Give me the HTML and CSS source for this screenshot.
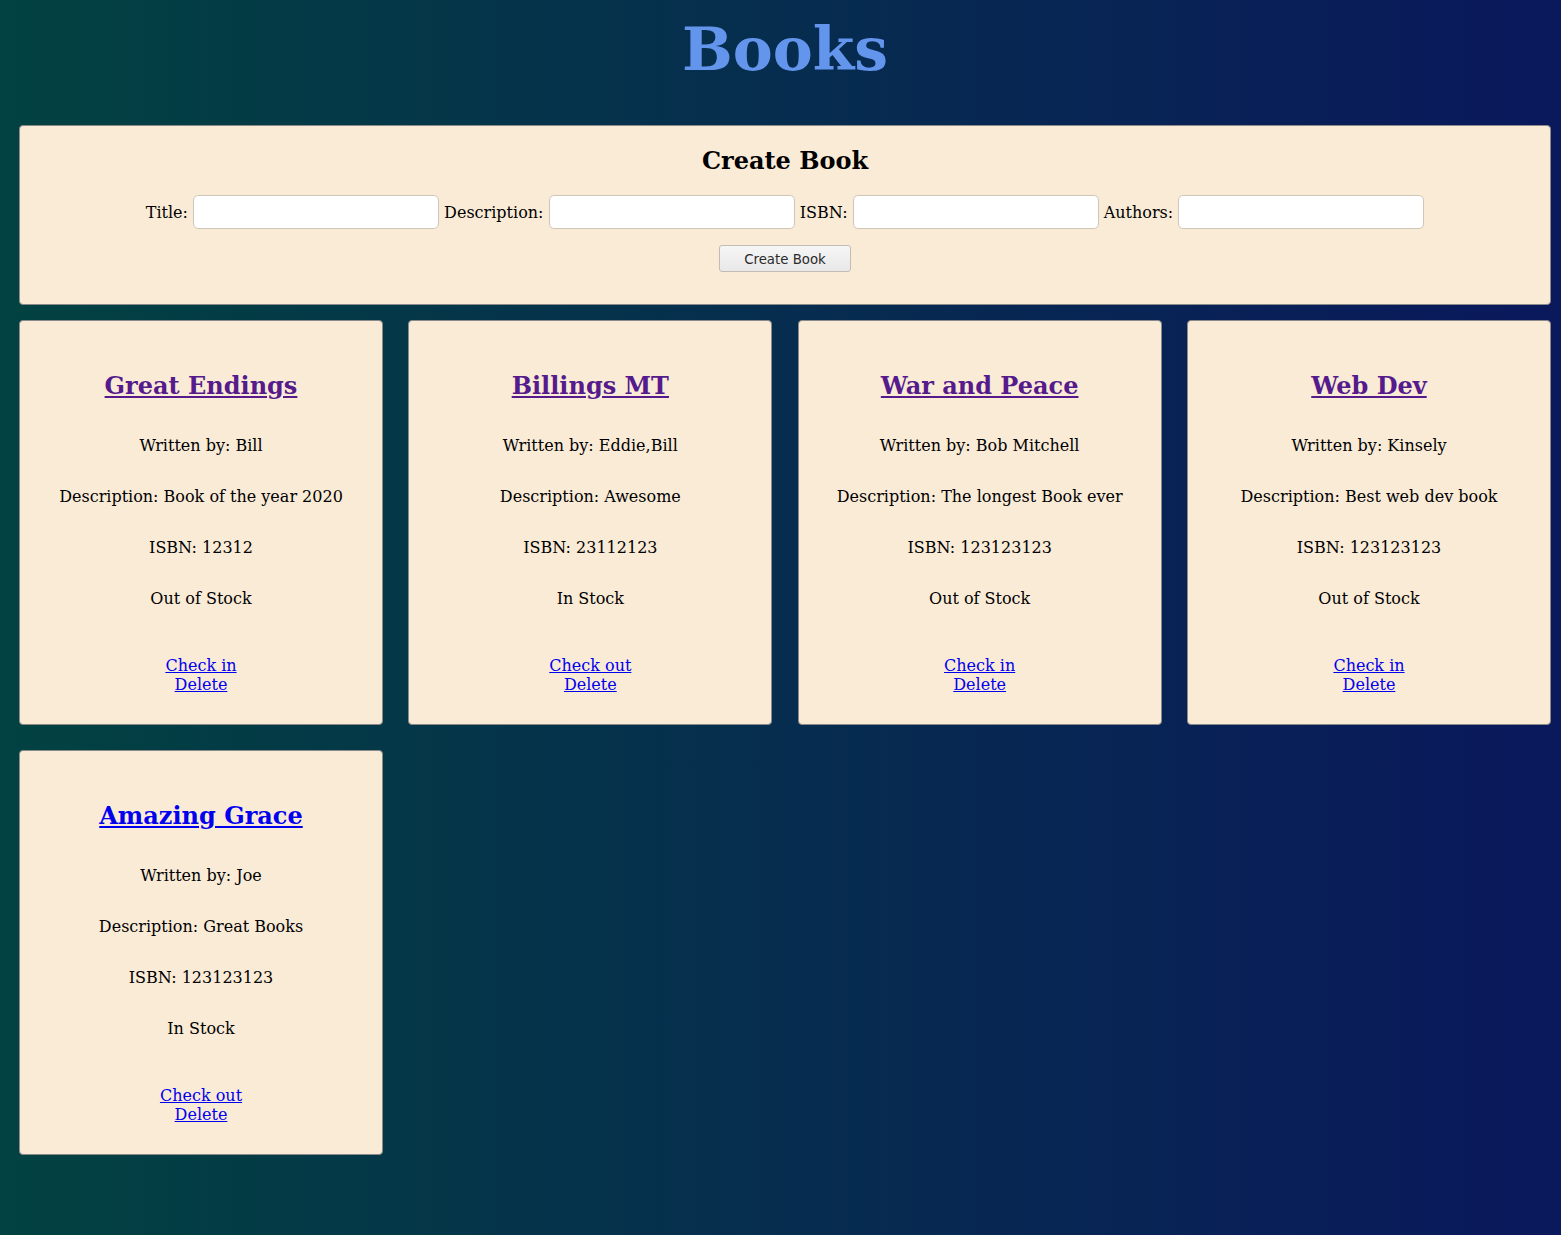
FILE: index.html
```html
<!DOCTYPE html>
<html>
<head>
<meta charset="utf-8">
<title>Books</title>
<link rel="stylesheet" href="styles.css">
</head>
<body>
<h1 class="page-title">Books</h1>
<div class="create-panel">
  <h2 class="create-title">Create Book</h2>
  <form class="create-form">
    <div class="form-row">
      <label class="field-label">Title:</label>
      <input class="field-input" type="text">
      <label class="field-label">Description:</label>
      <input class="field-input" type="text">
      <label class="field-label">ISBN:</label>
      <input class="field-input" type="text">
      <label class="field-label">Authors:</label>
      <input class="field-input" type="text">
    </div>
    <div class="form-actions">
      <button class="create-btn" type="button">Create Book</button>
    </div>
  </form>
</div>
<div class="book-grid">
  <div class="book-card">
    <h2 class="book-title"><a class="visited" href="#">Great Endings</a></h2>
    <p class="book-line">Written by: Bill</p>
    <p class="book-line">Description: Book of the year 2020</p>
    <p class="book-line">ISBN: 12312</p>
    <p class="book-line">Out of Stock</p>
    <div class="book-actions"><a href="#">Check in</a><a href="#">Delete</a></div>
  </div>
  <div class="book-card">
    <h2 class="book-title"><a class="visited" href="#">Billings MT</a></h2>
    <p class="book-line">Written by: Eddie,Bill</p>
    <p class="book-line">Description: Awesome</p>
    <p class="book-line">ISBN: 23112123</p>
    <p class="book-line">In Stock</p>
    <div class="book-actions"><a href="#">Check out</a><a href="#">Delete</a></div>
  </div>
  <div class="book-card">
    <h2 class="book-title"><a class="visited" href="#">War and Peace</a></h2>
    <p class="book-line">Written by: Bob Mitchell</p>
    <p class="book-line">Description: The longest Book ever</p>
    <p class="book-line">ISBN: 123123123</p>
    <p class="book-line">Out of Stock</p>
    <div class="book-actions"><a href="#">Check in</a><a href="#">Delete</a></div>
  </div>
  <div class="book-card">
    <h2 class="book-title"><a class="visited" href="#">Web Dev</a></h2>
    <p class="book-line">Written by: Kinsely</p>
    <p class="book-line">Description: Best web dev book</p>
    <p class="book-line">ISBN: 123123123</p>
    <p class="book-line">Out of Stock</p>
    <div class="book-actions"><a href="#">Check in</a><a href="#">Delete</a></div>
  </div>
  <div class="book-card">
    <h2 class="book-title"><a href="#">Amazing Grace</a></h2>
    <p class="book-line">Written by: Joe</p>
    <p class="book-line">Description: Great Books</p>
    <p class="book-line">ISBN: 123123123</p>
    <p class="book-line">In Stock</p>
    <div class="book-actions"><a href="#">Check out</a><a href="#">Delete</a></div>
  </div>
</div>
</body>
</html>
```
FILE: styles.css
```css
html, body {
  margin: 0;
  padding: 0;
}
body {
  min-height: 1235px;
  background: linear-gradient(to right, #024241, #0a185c);
  font-family: "DejaVu Serif", serif;
  font-size: 16px;
  color: #000;
  padding: 14px 10px 40px 19px;
  box-sizing: border-box;
}
a {
  color: #0000ee;
}
a.visited {
  color: #551a8b;
}
.page-title {
  margin: 0 0 41px;
  text-align: center;
  font-size: 60px;
  font-weight: bold;
  color: #6495ed;
  line-height: normal;
}
.create-panel {
  background: #faebd7;
  border: 1px solid #8a8a8a;
  border-radius: 4px;
  padding: 0 0 32px;
  text-align: center;
}
.create-title {
  margin: 20px 0;
  font-size: 24px;
  font-weight: bold;
}
.form-row {
  display: flex;
  justify-content: center;
  align-items: center;
  gap: 5.1px;
}
.field-label {
  font-size: 16px;
}
.field-input {
  width: 246px;
  height: 34px;
  box-sizing: border-box;
  border: 1px solid #cfc6bb;
  border-radius: 5px;
  background: #fff;
  padding: 2px 6px;
  font-size: 14px;
}
.form-actions {
  margin-top: 16px;
}
.create-btn {
  width: 132px;
  height: 27px;
  font-family: "DejaVu Sans", sans-serif;
  font-size: 13.3px;
  color: #2a2a2a;
  background: linear-gradient(#f6f6f6, #e8e8e8);
  border: 1px solid #c4bcb2;
  border-radius: 3px;
  padding: 1px 0 0;
}
.book-grid {
  display: grid;
  grid-template-columns: repeat(4, 1fr);
  column-gap: 25.33px;
  row-gap: 25px;
  margin-top: 15px;
}
.book-card {
  display: flex;
  flex-direction: column;
  align-items: center;
  background: #faebd7;
  border: 1px solid #8a8a8a;
  border-radius: 4px;
  padding: 30px 10px;
  text-align: center;
}
.book-title {
  margin: 20px 0;
  font-size: 24px;
  font-weight: bold;
}
.book-line {
  margin: 16px 0;
}
.book-actions {
  display: flex;
  flex-direction: column;
  align-items: center;
  margin-top: 32px;
}
```
